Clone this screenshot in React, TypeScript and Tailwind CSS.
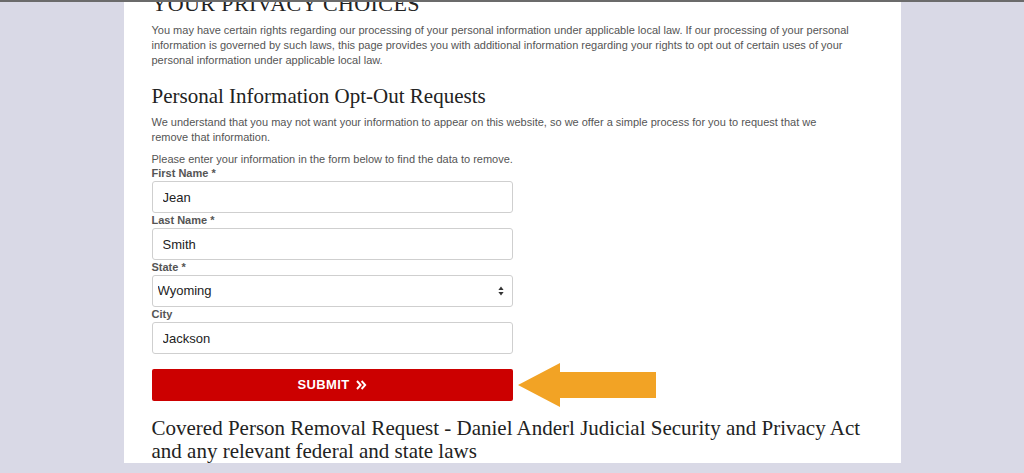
const sans = { fontFamily: '"Liberation Sans", Arial, sans-serif' }
const serif = { fontFamily: '"Liberation Serif", "Times New Roman", serif' }

function Field({ label, value }: { label: string; value: string }) {
  return (
    <div>
      <label className="block h-[15px] text-[11px] font-bold leading-[15px] text-[#555]">{label}</label>
      <input
        readOnly
        value={value}
        className="block h-[32px] w-[361px] rounded-[3px] border border-[#cfcfcf] bg-white px-[10px] text-[13px] text-[#222] outline-none"
        style={sans}
      />
    </div>
  )
}

export default function App() {
  return (
    <main className="min-h-screen overflow-hidden border-t-2 border-[#6b6b6b] bg-[#d9d9e6]" style={sans}>
      <div className="mx-auto h-[471px] w-[777px] bg-white pl-[28px] pr-[26px]">
        <h1 className="-mt-[10px] text-[22px] leading-[24px] tracking-[0.4px] text-[#222]" style={serif}>
          YOUR PRIVACY CHOICES
        </h1>
        <p className="mt-[7px] text-[11px] leading-[15px] text-[#555]">
          You may have certain rights regarding our processing of your personal information under applicable local law. If our processing of your personal
          information is governed by such laws, this page provides you with additional information regarding your rights to opt out of certain uses of your
          personal information under applicable local law.
        </p>

        <h2 className="mt-[16px] text-[21px] leading-[24px] text-[#222]" style={serif}>
          Personal Information Opt-Out Requests
        </h2>
        <p className="mt-[7px] text-[11px] leading-[15px] text-[#555]">
          We understand that you may not want your information to appear on this website, so we offer a simple process for you to request that we
          <br />
          remove that information.
        </p>
        <p className="mt-[7px] text-[11px] leading-[15px] text-[#555]">
          Please enter your information in the form below to find the data to remove.
        </p>

        <form className="-mt-[1px] flex flex-col">
          <Field label="First Name *" value="Jean" />
          <Field label="Last Name *" value="Smith" />
          <div>
            <label className="block h-[15px] text-[11px] font-bold leading-[15px] text-[#555]">State *</label>
            <div className="relative w-[361px]">
              <select
                defaultValue="Wyoming"
                className="block h-[32px] w-full appearance-none rounded-[3px] border border-[#cfcfcf] bg-white px-[5px] text-[13px] text-[#222] outline-none"
                style={sans}
              >
                <option>Wyoming</option>
              </select>
              <svg className="pointer-events-none absolute right-[9px] top-[11px]" width="6" height="10" viewBox="0 0 6 10">
                <path d="M3 0.5 L5.6 4 H0.4 Z" fill="#333" />
                <path d="M3 9.5 L5.6 6 H0.4 Z" fill="#333" />
              </svg>
            </div>
          </div>
          <Field label="City" value="Jackson" />

          <div className="mt-[15px] flex items-center">
            <button
              type="button"
              className="flex h-[32px] w-[361px] items-center justify-center rounded-[2px] bg-[#cc0000] text-[13px] font-bold tracking-[0.4px] text-white"
            >
              SUBMIT
              <svg className="ml-[6px]" width="11" height="10" viewBox="0 0 11 10">
                <path d="M1 1 L4.6 5 L1 9 M5.6 1 L9.2 5 L5.6 9" fill="none" stroke="#fff" strokeWidth="1.9" />
              </svg>
            </button>
            <svg className="-my-[6px] ml-[5px]" width="138" height="44" viewBox="0 0 138 44">
              <path d="M0 22 L42 0 V9 H138 V35 H42 V44 Z" fill="#f2a325" />
            </svg>
          </div>
        </form>

        <h2 className="mt-[16px] text-[21px] leading-[23px] text-[#222]" style={serif}>
          Covered Person Removal Request - Daniel Anderl Judicial Security and Privacy Act
          <br />
          and any relevant federal and state laws
        </h2>
      </div>
    </main>
  )
}
